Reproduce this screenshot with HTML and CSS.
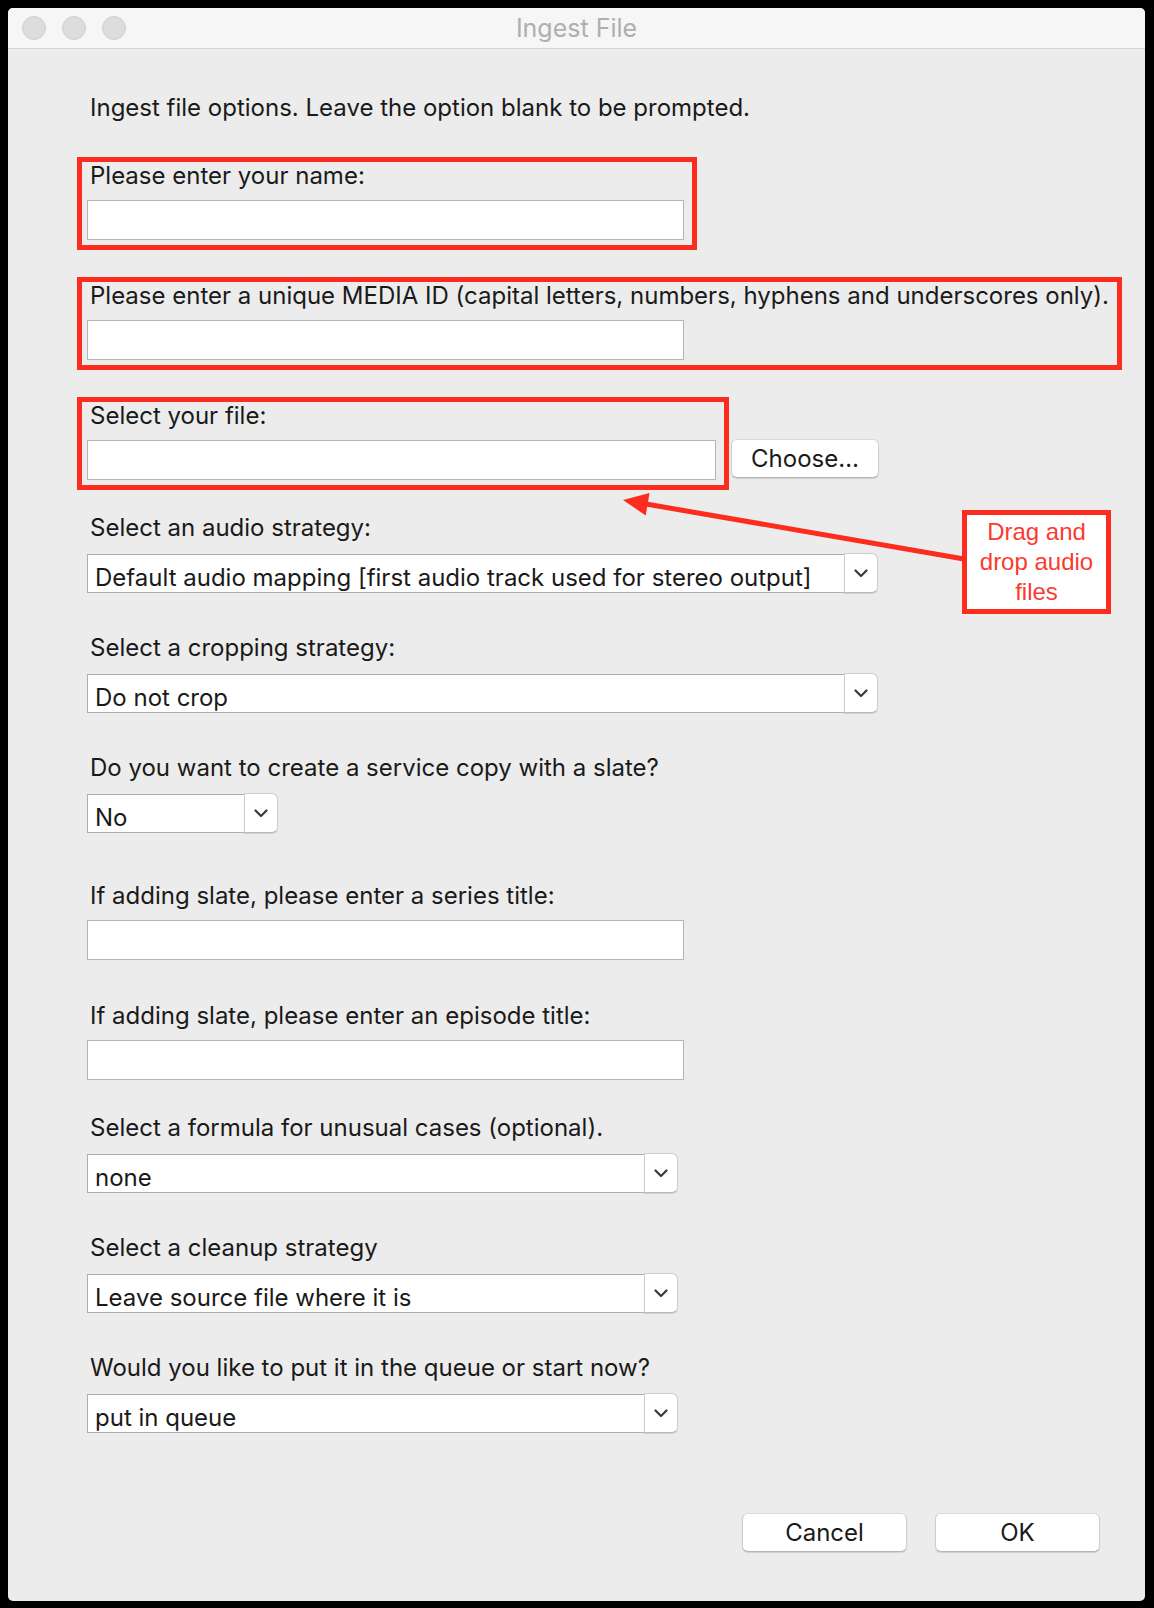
FILE: index.html
```html
<!DOCTYPE html>
<html lang="en">
<head>
<meta charset="utf-8">
<title>Ingest File</title>
<link rel="stylesheet" href="styles.css">
</head>
<body>
<div class="window">
  <div class="titlebar">
    <div class="lights">
      <span class="light"></span><span class="light"></span><span class="light"></span>
    </div>
    <div class="title">Ingest File</div>
  </div>

  <div class="content">
    <p class="intro">Ingest file options. Leave the option blank to be prompted.</p>

    <div class="group g-input field highlight">
      <div class="label">Please enter your name:</div>
      <div class="input w-name"></div>
    </div>

    <div class="group g-input field highlight">
      <div class="label">Please enter a unique MEDIA ID (capital letters, numbers, hyphens and underscores only).</div>
      <div class="input w-name"></div>
    </div>

    <div class="group g-input file-row">
      <div class="field highlight">
        <div class="label">Select your file:</div>
        <div class="input w-file"></div>
      </div>
      <button class="btn btn-choose">Choose…</button>
    </div>

    <div class="group g-select field">
      <div class="label">Select an audio strategy:</div>
      <div class="select w-wide">
        <div class="select-value">Default audio mapping [first audio track used for stereo output]</div>
        <div class="select-btn"><svg width="14" height="9" viewBox="0 0 14 9"><path d="M1.5 1.5 L7 7 L12.5 1.5" fill="none" stroke="#3a3a3a" stroke-width="2.2" stroke-linecap="round" stroke-linejoin="round"/></svg></div>
      </div>
    </div>

    <div class="group g-select field">
      <div class="label">Select a cropping strategy:</div>
      <div class="select w-wide">
        <div class="select-value">Do not crop</div>
        <div class="select-btn"><svg width="14" height="9" viewBox="0 0 14 9"><path d="M1.5 1.5 L7 7 L12.5 1.5" fill="none" stroke="#3a3a3a" stroke-width="2.2" stroke-linecap="round" stroke-linejoin="round"/></svg></div>
      </div>
    </div>

    <div class="group g-select field">
      <div class="label">Do you want to create a service copy with a slate?</div>
      <div class="select w-narrow">
        <div class="select-value">No</div>
        <div class="select-btn"><svg width="14" height="9" viewBox="0 0 14 9"><path d="M1.5 1.5 L7 7 L12.5 1.5" fill="none" stroke="#3a3a3a" stroke-width="2.2" stroke-linecap="round" stroke-linejoin="round"/></svg></div>
      </div>
    </div>

    <div class="group g-input field">
      <div class="label">If adding slate, please enter a series title:</div>
      <div class="input w-name"></div>
    </div>

    <div class="group g-input field">
      <div class="label">If adding slate, please enter an episode title:</div>
      <div class="input w-name"></div>
    </div>

    <div class="group g-select field">
      <div class="label">Select a formula for unusual cases (optional).</div>
      <div class="select w-mid">
        <div class="select-value">none</div>
        <div class="select-btn"><svg width="14" height="9" viewBox="0 0 14 9"><path d="M1.5 1.5 L7 7 L12.5 1.5" fill="none" stroke="#3a3a3a" stroke-width="2.2" stroke-linecap="round" stroke-linejoin="round"/></svg></div>
      </div>
    </div>

    <div class="group g-select field">
      <div class="label">Select a cleanup strategy</div>
      <div class="select w-mid">
        <div class="select-value">Leave source file where it is</div>
        <div class="select-btn"><svg width="14" height="9" viewBox="0 0 14 9"><path d="M1.5 1.5 L7 7 L12.5 1.5" fill="none" stroke="#3a3a3a" stroke-width="2.2" stroke-linecap="round" stroke-linejoin="round"/></svg></div>
      </div>
    </div>

    <div class="group g-select field">
      <div class="label">Would you like to put it in the queue or start now?</div>
      <div class="select w-mid">
        <div class="select-value">put in queue</div>
        <div class="select-btn"><svg width="14" height="9" viewBox="0 0 14 9"><path d="M1.5 1.5 L7 7 L12.5 1.5" fill="none" stroke="#3a3a3a" stroke-width="2.2" stroke-linecap="round" stroke-linejoin="round"/></svg></div>
      </div>
    </div>

    <div class="actions">
      <button class="btn btn-action">Cancel</button>
      <button class="btn btn-action">OK</button>
    </div>
  </div>

  <svg class="arrow" width="1137" height="1593" viewBox="0 0 1137 1593">
    <line x1="638" y1="496" x2="956" y2="551" stroke="#fc2c1f" stroke-width="5"/>
    <polygon points="615,492 641.5,485 637.7,507.5" fill="#fc2c1f"/>
  </svg>
  <div class="callout">Drag and<br>drop audio<br>files</div>
</div>
</body>
</html>
```

FILE: styles.css
```css
html, body {
  margin: 0;
  padding: 0;
  background: #000;
}

body {
  width: 1154px;
  height: 1608px;
  overflow: hidden;
  font-family: "Inter", "Noto Sans", sans-serif;
  color: #1a1a1a;
}

.window {
  position: relative;
  margin: 8px 0 0 8px;
  width: 1137px;
  height: 1593px;
  background: #ececec;
  border-radius: 5px;
  overflow: hidden;
}

.titlebar {
  position: relative;
  height: 40px;
  background: #f6f6f6;
  border-bottom: 1px solid #d3d3d3;
  display: flex;
  align-items: center;
  justify-content: center;
}

.lights {
  position: absolute;
  left: 14px;
  top: 8px;
  display: flex;
  gap: 16px;
}

.light {
  width: 22px;
  height: 22px;
  border-radius: 50%;
  background: #dcdcdc;
  border: 1px solid #d0d0d0;
}

.title {
  font-size: 25px;
  color: #afafaf;
  line-height: 40px;
}

.content {
  padding-left: 69px;
}

.intro {
  margin: 0;
  padding-top: 46px;
  padding-left: 13px;
  font-size: 24px;
  line-height: 26px;
}

.field {
  width: fit-content;
  border: 5px solid transparent;
  padding: 1px 8px 5px 5px;
}

.field.highlight {
  border-color: #fc2c1f;
}

.content > .group:first-of-type {
  margin-top: 36px;
}

.g-input + .g-input { margin-top: 27px; }
.g-select + .g-select { margin-top: 26px; }
.g-input + .g-select { margin-top: 19px; }
.g-select + .g-input { margin-top: 34px; }

.label {
  font-size: 24px;
  line-height: 26px;
  padding-left: 3px;
  white-space: nowrap;
}

.input {
  box-sizing: border-box;
  margin-top: 11px;
  height: 40px;
  background: #fff;
  border: 1px solid #b4b4b4;
}

.w-name { width: 597px; }
.w-file { width: 629px; }
.w-wide { width: 791px; }
.w-mid { width: 591px; }
.w-narrow { width: 191px; }

.file-row {
  display: flex;
  align-items: flex-end;
}

.btn {
  font-family: "Inter", "Noto Sans", sans-serif;
  font-size: 24px;
  color: #1a1a1a;
  background: #fff;
  border: 1px solid #cfcfcf;
  border-top-color: #d9d9d9;
  border-bottom-color: #b5b5b5;
  border-radius: 6px;
  box-shadow: 0 1px 1px rgba(0, 0, 0, 0.12);
  padding: 0;
  box-sizing: border-box;
}

.btn-choose {
  width: 148px;
  height: 39px;
  margin-left: 2px;
  margin-bottom: 12px;
}

.select {
  box-sizing: border-box;
  margin-top: 13px;
  height: 39px;
  display: flex;
}

.select-value {
  flex: 1;
  box-sizing: border-box;
  height: 39px;
  background: #fff;
  border: 1px solid #adadad;
  border-right: none;
  padding: 10px 0 0 7px;
  font-size: 24px;
  line-height: 26px;
  white-space: nowrap;
  overflow: hidden;
}

.select-btn {
  width: 34px;
  box-sizing: border-box;
  height: 40px;
  margin-top: -1px;
  background: #fff;
  border: 1px solid #cdcdcd;
  border-bottom-color: #b8b8b8;
  border-radius: 0 6px 6px 0;
  box-shadow: 0 1px 1px rgba(0, 0, 0, 0.12);
  display: flex;
  align-items: center;
  justify-content: center;
}

.actions {
  display: flex;
  justify-content: flex-end;
  gap: 28px;
  margin-top: 70px;
  padding-right: 45px;
}

.btn-action {
  width: 165px;
  height: 39px;
}

.arrow {
  position: absolute;
  left: 0;
  top: 0;
  pointer-events: none;
}

.callout {
  position: absolute;
  left: 954px;
  top: 502px;
  width: 149px;
  height: 104px;
  box-sizing: border-box;
  border: 5px solid #fc2c1f;
  background: #fff;
  color: #fb3b2f;
  font-family: "Liberation Sans", Arial, sans-serif;
  font-size: 24px;
  line-height: 30px;
  text-align: center;
  display: flex;
  align-items: center;
  justify-content: center;
}
```
